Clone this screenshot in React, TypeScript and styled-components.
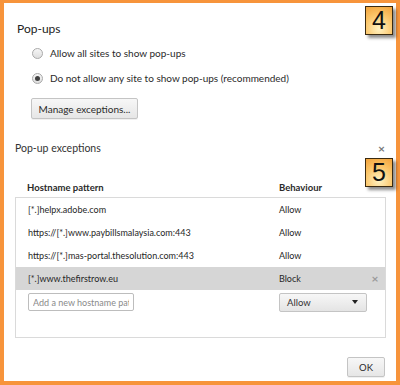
import React from 'react';
import styled, { createGlobalStyle } from 'styled-components';

const GlobalStyle = createGlobalStyle`
	html, body {
		margin: 0;
		padding: 0;
		background: #ffffff;
	}
	body {
		font-family: Lato, 'Open Sans', sans-serif;
		color: #333333;
	}
`;

const Frame = styled.div`
	position: relative;
	width: 400px;
	height: 385px;
	box-sizing: border-box;
	border-style: solid;
	border-color: #f7943b;
	border-width: 3px 4px 4px 4px;
	background: #ffffff;
	display: flex;
	flex-direction: column;
	font-size: 10px;
`;

const Settings = styled.section`
	padding: 18px 0 0 13px;
	display: flex;
	flex-direction: column;
	align-items: flex-start;
`;

const Title = styled.h2`
	margin: 0;
	font-size: 12px;
	line-height: 16px;
	font-weight: normal;
	color: #222222;
`;

const RadioList = styled.div`
	display: flex;
	flex-direction: column;
	gap: 5px;
	margin: 6px 0 0 15px;
`;

const RadioRow = styled.label`
	display: flex;
	align-items: center;
	gap: 7px;
	height: 20px;
	line-height: 20px;
	color: #2a2a2a;
	font-size: 10px;
`;

const RadioDot = styled.span<{ $checked?: boolean }>`
	flex: none;
	width: 11px;
	height: 11px;
	box-sizing: border-box;
	border-radius: 50%;
	border: 1px solid #a9a9a9;
	background: linear-gradient(#f6f6f6, #dedede);
	display: flex;
	align-items: center;
	justify-content: center;

	&::after {
		content: '';
		display: ${p => (p.$checked ? 'block' : 'none')};
		width: 5px;
		height: 5px;
		border-radius: 50%;
		background: #404040;
	}
`;

const Button = styled.button`
	font: inherit;
	color: #2a2a2a;
	height: 21px;
	padding: 0 9px;
	border: 1px solid #c4c4c4;
	border-radius: 2px;
	background: linear-gradient(#f7f7f7, #e6e6e6);
	box-shadow: 0 1px 0 rgba(0, 0, 0, 0.06);
	cursor: pointer;
`;

const ManageButton = styled(Button)`
	margin: 10px 0 0 14px;
	width: 107px;
	padding: 0;
`;

const Dialog = styled.section`
	flex: 1;
	display: flex;
	flex-direction: column;
	padding: 21px 10px 0 11px;
`;

const DialogHeader = styled.div`
	display: flex;
	justify-content: space-between;
	align-items: center;
	height: 16px;
`;

const DialogTitle = styled.h3`
	margin: 0;
	font-size: 10.5px;
	font-weight: normal;
	color: #333333;
`;

const CloseX = styled.span`
	color: #777777;
	font-size: 12px;
	font-weight: bold;
	margin-right: 1px;
`;

const ColumnHeads = styled.div`
	display: grid;
	grid-template-columns: 252px 1fr;
	margin-top: 25px;
	padding-left: 12px;
	font-weight: bold;
	color: #2a2a2a;
	font-size: 9.5px;
	height: 14px;
	line-height: 14px;
`;

const Table = styled.div`
	margin-top: 2px;
	height: 141px;
	border: 1px solid #dadada;
	width: 371px;
	box-sizing: border-box;
	display: flex;
	flex-direction: column;
	font-size: 9px;
`;

const Row = styled.div<{ $selected?: boolean }>`
	display: grid;
	grid-template-columns: 251px 1fr 20px;
	align-items: center;
	height: 23px;
	padding-left: 12px;
	background: ${p => (p.$selected ? '#d6d6d6' : 'transparent')};
	color: #262626;
`;

const RowRemove = styled.span`
	color: #9a9a9a;
	font-size: 12px;
	font-weight: bold;
	text-align: center;
`;

const AddRow = styled.div`
	display: grid;
	grid-template-columns: 251px 88px;
	align-items: center;
	height: 24px;
	padding-left: 12px;
`;

const HostInput = styled.input`
	font: inherit;
	width: 106px;
	height: 18px;
	box-sizing: border-box;
	border: 1px solid #bdbdbd;
	border-radius: 2px;
	padding: 0 4px;
	color: #333333;
	outline: none;
	text-overflow: clip;

	&::placeholder {
		color: #8a8a8a;
	}
`;

const Select = styled.div`
	height: 19px;
	box-sizing: border-box;
	border: 1px solid #c4c4c4;
	border-radius: 2px;
	background: linear-gradient(#f7f7f7, #e4e4e4);
	display: flex;
	align-items: center;
	justify-content: space-between;
	padding: 0 8px 0 7px;
	color: #333333;
	font-size: 9.5px;

	&::after {
		content: '';
		border-left: 3.5px solid transparent;
		border-right: 3.5px solid transparent;
		border-top: 4px solid #222222;
	}
`;

const Footer = styled.div`
	display: flex;
	justify-content: flex-end;
	padding: 19px 1px 0 0;
`;

const OkButton = styled(Button)`
	width: 38px;
	height: 20px;
	padding: 0;
	font-size: 9.5px;
`;

const Badge = styled.div<{ $top: number }>`
	position: absolute;
	top: ${p => p.$top}px;
	right: 3px;
	width: 28px;
	height: 29px;
	box-sizing: border-box;
	border: 1px solid #3a2a10;
	background: radial-gradient(circle at 50% 80%, #fff3c4 0%, #fbc66a 55%, #f2a23a 100%);
	box-shadow: 3px 3px 3px rgba(0, 0, 0, 0.45);
	display: flex;
	align-items: center;
	justify-content: center;
	font-family: 'Liberation Sans', Arial, sans-serif;
	font-size: 25px;
	color: #111111;
	line-height: 1;
`;

const rows = [
	{ host: '[*.]helpx.adobe.com', action: 'Allow' },
	{ host: 'https://[*.]www.paybillsmalaysia.com:443', action: 'Allow' },
	{ host: 'https://[*.]mas-portal.thesolution.com:443', action: 'Allow' },
	{ host: '[*.]www.thefirstrow.eu', action: 'Block', selected: true },
];

export default function App() {
	return (
		<>
			<GlobalStyle />
			<Frame>
				<Settings>
					<Title>Pop-ups</Title>
					<RadioList>
						<RadioRow>
							<RadioDot />
							Allow all sites to show pop-ups
						</RadioRow>
						<RadioRow>
							<RadioDot $checked />
							Do not allow any site to show pop-ups (recommended)
						</RadioRow>
					</RadioList>
					<ManageButton>Manage exceptions...</ManageButton>
				</Settings>
				<Dialog>
					<DialogHeader>
						<DialogTitle>Pop-up exceptions</DialogTitle>
						<CloseX>×</CloseX>
					</DialogHeader>
					<ColumnHeads>
						<span>Hostname pattern</span>
						<span>Behaviour</span>
					</ColumnHeads>
					<Table>
						{rows.map(r => (
							<Row key={r.host} $selected={r.selected}>
								<span>{r.host}</span>
								<span>{r.action}</span>
								{r.selected ? <RowRemove>×</RowRemove> : <span />}
							</Row>
						))}
						<AddRow>
							<HostInput placeholder="Add a new hostname pattern" />
							<Select>Allow</Select>
						</AddRow>
					</Table>
					<Footer>
						<OkButton>OK</OkButton>
					</Footer>
				</Dialog>
				<Badge $top={3}>4</Badge>
				<Badge $top={155}>5</Badge>
			</Frame>
		</>
	);
}
